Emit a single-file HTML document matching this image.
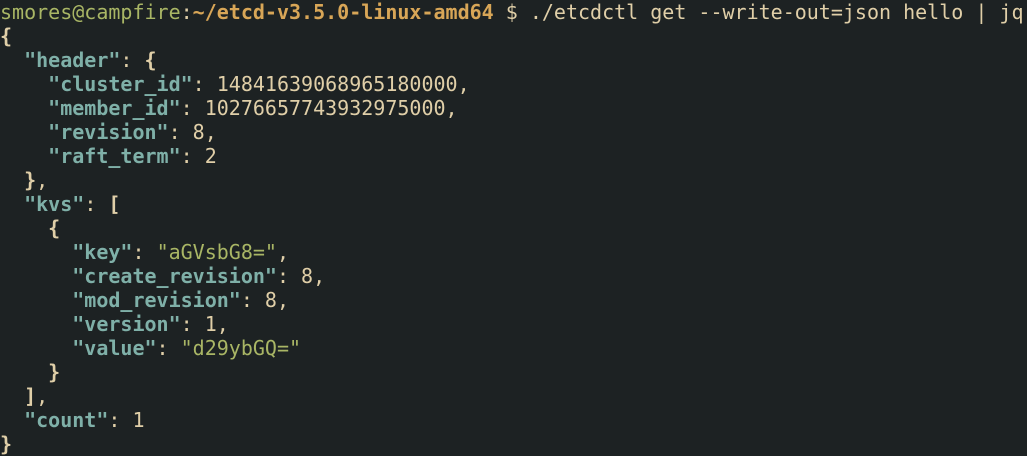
<!DOCTYPE html>
<html><head><meta charset="utf-8"><style>
html,body{margin:0;padding:0;background:#1d2223;width:1027px;height:440px;overflow:hidden}
pre{position:absolute;left:0;top:0px;margin:0;font-family:"DejaVu Sans Mono","Liberation Mono",monospace;font-size:20px;line-height:24px;color:#e0cfa8;white-space:pre}
.g{color:#a9b665}.y{color:#d8a657;font-weight:bold}.k{color:#7fb0a8;font-weight:bold}.q{color:#7fb0a8}.b{font-weight:bold}.s{color:#a9b665}
</style></head><body><pre><span class="g">smores@campfire</span>:<span class="y">~/etcd-v3.5.0-linux-amd64</span> $ ./etcdctl get --write-out=json hello | jq
<span class="b">{</span>
  <span class="k">"header"</span>: <span class="b">{</span>
    <span class="k">"cluster_id"</span>: 14841639068965180000,
    <span class="k">"member_id"</span>: 10276657743932975000,
    <span class="k">"revision"</span>: 8,
    <span class="k">"raft_term"</span>: 2
  <span class="b">}</span>,
  <span class="k">"kvs"</span>: <span class="b">[</span>
    <span class="b">{</span>
      <span class="k">"key"</span>: <span class="s">"aGVsbG8="</span>,
      <span class="k">"create_revision"</span>: 8,
      <span class="k">"mod_revision"</span>: 8,
      <span class="k">"version"</span>: 1,
      <span class="k">"value"</span>: <span class="s">"d29ybGQ="</span>
    <span class="b">}</span>
  <span class="b">]</span>,
  <span class="k">"count"</span>: 1
<span class="b">}</span></pre></body></html>
